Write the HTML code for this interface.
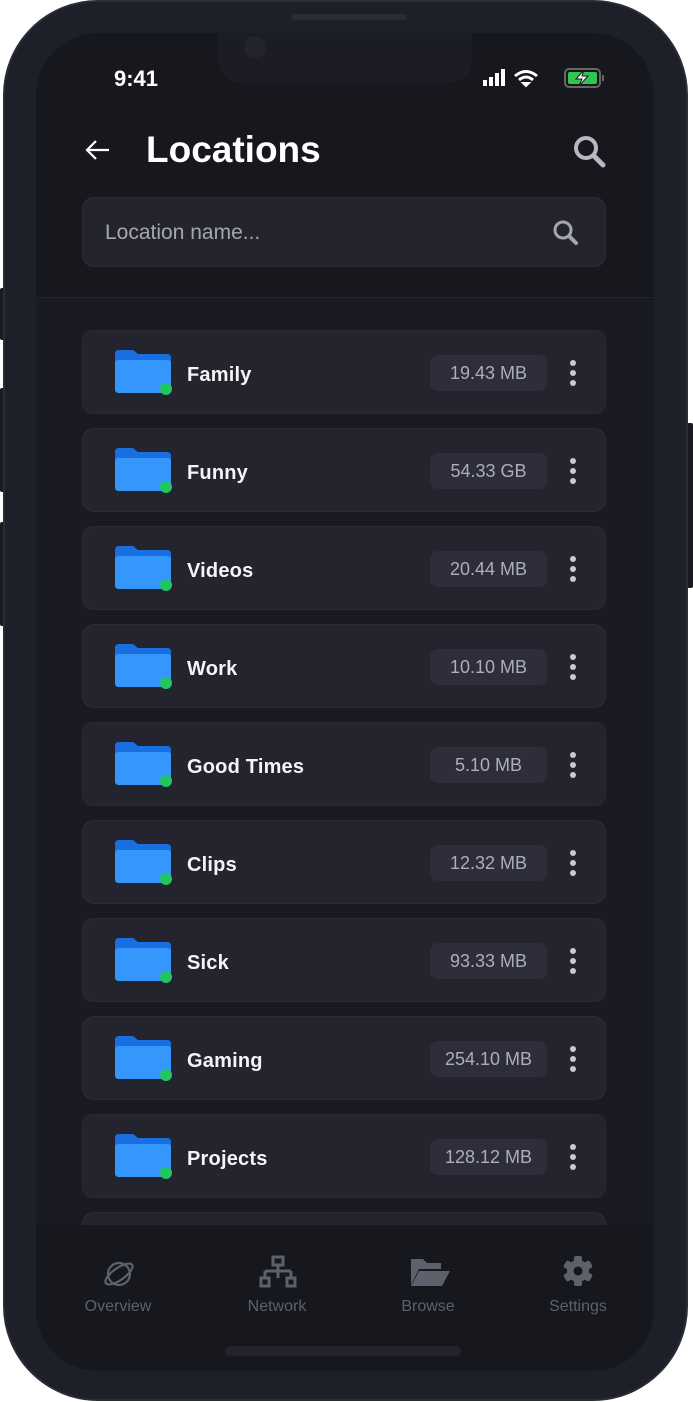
<!DOCTYPE html>
<html><head><style>
*{margin:0;padding:0;box-sizing:border-box}
body{width:693px;height:1402px;background:#fff;position:relative;overflow:hidden;font-family:"Liberation Sans",sans-serif}
.btn{position:absolute;background:#1a1b22;border-radius:2px}
.phone{position:absolute;left:3px;top:0;width:685px;height:1401px;border-radius:95px;background:#1e2029;border:2px solid #2a2c36}
.screen{position:absolute;left:36px;top:33px;width:618px;height:1338px;border-radius:62px;background:#17181e;overflow:hidden}
.notch{position:absolute;left:182px;top:0;width:254px;height:50px;background:#1c1d24;border-radius:0 0 22px 22px}
.cam{position:absolute;left:26px;top:3px;width:22px;height:22px;border-radius:50%;background:#23242b}
.list{position:absolute;left:0;top:264px;width:618px;height:928px;background:#1a1b22;border-top:1px solid #23242c}
.card{position:absolute;left:46px;width:524px;height:84px;background:#23242e;border:1px solid #2b2c37;border-radius:12px}
.name{position:absolute;left:104px;top:33px;color:#f4f4f6;font-size:20px;font-weight:bold;letter-spacing:.2px}
.size{position:absolute;left:347px;top:24px;width:117px;height:36px;border-radius:8px;background:#2d2e3a;color:#adaeb8;font-size:18px;text-align:center;line-height:36px}
.dots{position:absolute;left:487px;top:29px;width:6px}
.dots i{display:block;width:6px;height:6px;border-radius:50%;background:#c8c9d0;margin-bottom:4px}
.fold{position:absolute;left:30px;top:18px}
.nav{position:absolute;left:0;top:1192px;width:618px;height:146px;background:#17181e}
.nl{position:absolute;top:73px;color:#5e606b;font-size:16px;text-align:center;width:120px}
</style></head><body>
<div class="btn" style="left:0;top:288px;width:5px;height:52px"></div>
<div class="btn" style="left:0;top:388px;width:5px;height:104px"></div>
<div class="btn" style="left:0;top:522px;width:5px;height:104px"></div>
<div class="btn" style="left:687px;top:423px;width:6px;height:165px"></div>
<div class="phone">
<div style="position:absolute;left:286px;top:12px;width:116px;height:6px;border-radius:3px;background:#2a2c35"></div>
</div>
<div class="screen">
<div class="notch"><div class="cam"></div></div>
<div style="position:absolute;left:78px;top:33px;color:#fff;font-size:22px;font-weight:bold">9:41</div>
<svg style="position:absolute;left:447px;top:35px" width="130" height="22">
<rect x="0" y="12" width="4" height="6" fill="#fff"/><rect x="6" y="9" width="4" height="9" fill="#fff"/><rect x="12" y="5" width="4" height="13" fill="#fff"/><rect x="18" y="1" width="4" height="17" fill="#fff"/>
<path d="M32 8 Q43 -1 54 8" stroke="#fff" stroke-width="3" fill="none"/><path d="M36 12 Q43 6 50 12" stroke="#fff" stroke-width="3" fill="none"/><path d="M40 15 L43 18 L46 15 Z" fill="#fff" stroke="#fff" stroke-width="2"/>
<rect x="82" y="1" width="35" height="18" rx="4" fill="none" stroke="#666" stroke-width="2"/><rect x="85" y="4" width="29" height="12" rx="2" fill="#31c552"/><rect x="119" y="7" width="2" height="6" fill="#666"/>
<path d="M101 2 L93 11 L99 11 L96 18 L105 8 L99 8 Z" fill="#fff" stroke="#17181e" stroke-width="1"/>
</svg>
<svg style="position:absolute;left:48px;top:105px" width="28" height="24"><path d="M25 12H3M12 3L3 12L12 21" stroke="#fff" stroke-width="2.2" fill="none"/></svg>
<div style="position:absolute;left:110px;top:96px;color:#fff;font-size:37px;font-weight:bold">Locations</div>
<svg style="position:absolute;left:537px;top:102px" width="34" height="34"><circle cx="13" cy="13" r="10" stroke="#b6b7c0" stroke-width="4" fill="none"/><path d="M21 21L30 30" stroke="#b6b7c0" stroke-width="5" stroke-linecap="round"/></svg>
<div style="position:absolute;left:46px;top:164px;width:524px;height:70px;border-radius:12px;background:#23242e;border:1px solid #2b2c37">
<div style="position:absolute;left:22px;top:23px;color:#a5a6b0;font-size:21px">Location name...</div>
<svg style="position:absolute;left:469px;top:21px" width="28" height="28"><circle cx="11" cy="11" r="8" stroke="#a5a6b0" stroke-width="3" fill="none"/><path d="M17 17L24 24" stroke="#a5a6b0" stroke-width="4" stroke-linecap="round"/></svg>
</div>
<div class="list"></div>
<div class="nav">
<svg style="position:absolute;left:66px;top:33px" width="36" height="34"><ellipse cx="17" cy="16" rx="11" ry="11" stroke="#5e606b" stroke-width="2.2" fill="none"/><ellipse cx="17" cy="16" rx="16" ry="6" transform="rotate(-35 17 16)" stroke="#5e606b" stroke-width="2.2" fill="none"/></svg>
<div class="nl" style="left:22px">Overview</div>
<svg style="position:absolute;left:223px;top:30px" width="38" height="36"><rect x="14" y="2" width="10" height="8" stroke="#5e606b" stroke-width="3" fill="none"/><path d="M19 10V16M6 16H32M6 16V23M32 16V23M19 16V23" stroke="#5e606b" stroke-width="3" fill="none"/><rect x="2" y="23" width="8" height="8" stroke="#5e606b" stroke-width="3" fill="none"/><rect x="28" y="23" width="8" height="8" stroke="#5e606b" stroke-width="3" fill="none"/></svg>
<div class="nl" style="left:181px">Network</div>
<svg style="position:absolute;left:373px;top:30px" width="42" height="34"><path d="M2 4H14L18 8H32V14H10L2 30Z" fill="#5e606b"/><path d="M10 16H41L33 31H2Z" fill="#5e606b"/></svg>
<div class="nl" style="left:332px">Browse</div>
<svg style="position:absolute;left:526px;top:30px" width="32" height="32"><g fill="#5e606b" transform="translate(16 16)"><rect x="-4" y="-15" width="8" height="30" rx="2"/><rect x="-4" y="-15" width="8" height="30" rx="2" transform="rotate(60)"/><rect x="-4" y="-15" width="8" height="30" rx="2" transform="rotate(120)"/><circle r="11"/></g><circle cx="16" cy="16" r="4.5" fill="#17181e"/></svg>
<div class="nl" style="left:482px">Settings</div>
<div style="position:absolute;left:189px;top:121px;width:236px;height:10px;border-radius:5px;background:#22232b"></div>
</div>
</div>
<script>
var d=[["Family","19.43 MB"],["Funny","54.33 GB"],["Videos","20.44 MB"],["Work","10.10 MB"],["Good Times","5.10 MB"],["Clips","12.32 MB"],["Sick","93.33 MB"],["Gaming","254.10 MB"],["Projects","128.12 MB"],["",""]];
var h="";d.forEach(function(x,i){h+='<div class="card" style="top:'+(32+i*98)+'px">'+(x[0]?'<svg class="fold" width="62" height="48"><path d="M2 5Q2 1 6 1H20L25 5H54Q58 5 58 9V40Q58 44 54 44H6Q2 44 2 40Z" fill="#1a6fe0"/><path d="M2 14Q2 11 6 11H54Q58 11 58 14V40Q58 44 54 44H6Q2 44 2 40Z" fill="#3597fb"/><circle cx="53" cy="40" r="6" fill="#22c55e"/></svg><div class="name">'+x[0]+'</div><div class="size">'+x[1]+'</div><div class="dots"><i></i><i></i><i></i></div>':'')+'</div>';});
document.querySelector('.list').innerHTML=h;
</script>
</body></html>
